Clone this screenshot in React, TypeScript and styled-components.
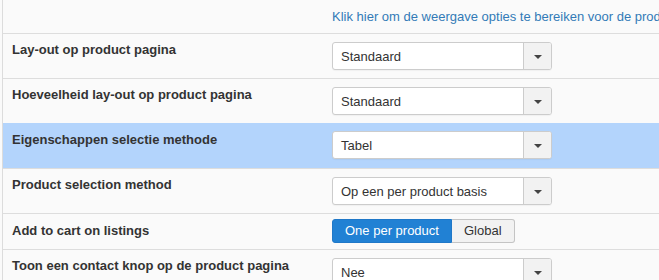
import React from "react";
import styled, { createGlobalStyle } from "styled-components";

const Global = createGlobalStyle`
  html, body { margin: 0; padding: 0; background: #fafafa; }
  body { font-family: "Liberation Sans", Arial, sans-serif; font-size: 13px; color: #333; overflow: hidden; }
  *, *::before, *::after { box-sizing: border-box; }
`;

const Page = styled.div`
  margin-left: 2px;
  border-left: 1px solid #dcdcdc;
  height: 280px;
  overflow: hidden;
  background: #fafafa;
`;

const HeaderRow = styled.div`
  display: grid;
  grid-template-columns: 320px 1fr;
  height: 33px;
  align-items: center;
  overflow: hidden;
`;

const HeaderLink = styled.a`
  grid-column: 2;
  padding-left: 9px;
  color: #337ab7;
  text-decoration: none;
  white-space: nowrap;
  overflow: hidden;
  line-height: 18px;
  margin-top: 1px;
`;

const Row = styled.div<{ $highlight?: boolean; $height: number }>`
  display: grid;
  grid-template-columns: 320px 1fr;
  height: ${(p) => p.$height}px;
  border-top: 1px solid ${(p) => (p.$highlight ? "#b3d4fc" : "#dddddd")};
  background: ${(p) => (p.$highlight ? "#b3d4fc" : "transparent")};
`;

const Label = styled.div<{ $top: number }>`
  padding: ${(p) => p.$top}px 0 0 9px;
  font-weight: bold;
  line-height: 18px;
  color: #333;
  white-space: nowrap;
`;

const Control = styled.div<{ $top: number }>`
  padding: ${(p) => p.$top}px 0 0 9px;
`;

const SelectBox = styled.div`
  display: flex;
  width: 220px;
  height: 28px;
  border: 1px solid #cccccc;
  border-radius: 3px;
  background: #fff;
  box-shadow: 0 1px 1px rgba(0, 0, 0, 0.04);
  overflow: hidden;
`;

const SelectValue = styled.div`
  flex: 1;
  padding-left: 8px;
  display: flex;
  align-items: center;
  color: #333;
  white-space: nowrap;
`;

const SelectAddon = styled.div`
  width: 28px;
  border-left: 1px solid #cccccc;
  background: #f2f2f2;
  display: flex;
  align-items: center;
  justify-content: center;
`;

const Caret = styled.span`
  width: 0;
  height: 0;
  border-left: 4px solid transparent;
  border-right: 4px solid transparent;
  border-top: 4px solid #444;
  margin-top: 1px;
`;

const BtnGroup = styled.div`
  display: inline-flex;
`;

const ToggleBtn = styled.button<{ $active?: boolean; $first?: boolean }>`
  font-family: "Liberation Sans", Arial, sans-serif;
  font-size: 13px;
  height: 24px;
  padding: 0 12px;
  border: 1px solid ${(p) => (p.$active ? "#1f78c8" : "#c4c4c4")};
  background: ${(p) => (p.$active ? "#2181d4" : "#f2f2f2")};
  color: ${(p) => (p.$active ? "#fff" : "#333")};
  border-radius: ${(p) => (p.$first ? "3px 0 0 3px" : "0 3px 3px 0")};
  ${(p) => (p.$first ? "" : "border-left: none;")}
  line-height: 22px;
  cursor: pointer;
`;

const Select = ({ value }: { value: string }) => (
  <SelectBox>
    <SelectValue>{value}</SelectValue>
    <SelectAddon>
      <Caret />
    </SelectAddon>
  </SelectBox>
);

export default function App() {
  return (
    <>
      <Global />
      <Page>
        <HeaderRow>
          <HeaderLink href="#">
            Klik hier om de weergave opties te bereiken voor de productpagina
          </HeaderLink>
        </HeaderRow>
        <Row $height={45}>
          <Label $top={7}>Lay-out op product pagina</Label>
          <Control $top={8}>
            <Select value="Standaard" />
          </Control>
        </Row>
        <Row $height={45}>
          <Label $top={7}>Hoeveelheid lay-out op product pagina</Label>
          <Control $top={8}>
            <Select value="Standaard" />
          </Control>
        </Row>
        <Row $height={45} $highlight>
          <Label $top={7}>Eigenschappen selectie methode</Label>
          <Control $top={7}>
            <Select value="Tabel" />
          </Control>
        </Row>
        <Row $height={45}>
          <Label $top={7}>Product selection method</Label>
          <Control $top={8}>
            <Select value="Op een per product basis" />
          </Control>
        </Row>
        <Row $height={36}>
          <Label $top={8}>Add to cart on listings</Label>
          <Control $top={5}>
            <BtnGroup>
              <ToggleBtn $active $first>
                One per product
              </ToggleBtn>
              <ToggleBtn>Global</ToggleBtn>
            </BtnGroup>
          </Control>
        </Row>
        <Row $height={45}>
          <Label $top={7}>Toon een contact knop op de product pagina</Label>
          <Control $top={8}>
            <Select value="Nee" />
          </Control>
        </Row>
      </Page>
    </>
  );
}
